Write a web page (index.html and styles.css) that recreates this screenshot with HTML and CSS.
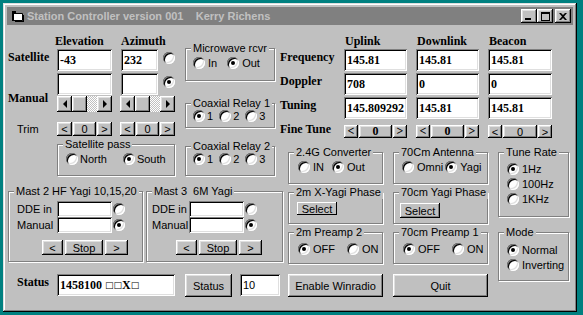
FILE: index.html
```html
<!DOCTYPE html>
<html lang="en">
<head>
<meta charset="UTF-8">
<title>Station Controller</title>
<link rel="stylesheet" href="styles.css">
</head>
<body>
<div class="win">
  <div class="title">
    <svg class="ico" width="16" height="16" viewBox="0 0 16 16">
      <path d="M4.5 5.5h9v7h-9z" fill="#fff" stroke="#000"/>
      <path d="M3 3h4v2h3v1H5v7H3z" fill="#000"/>
      <path d="M14 7h1v7H6v-1h8z" fill="#000"/>
    </svg>
    <span class="ttl">Station Controller version 001    Kerry Richens</span>
    <div class="tbtns">
      <span class="btn tbtn"><svg width="8" height="7" viewBox="0 0 8 7"><path d="M0 5h6v2H0z"/></svg></span>
      <span class="btn tbtn"><svg width="9" height="9" viewBox="0 0 9 9"><path d="M0 0h9v9H0zM1 2v6h7V2z" fill-rule="evenodd"/></svg></span>
      <span class="btn tbtn cls"><svg width="8" height="7" viewBox="0 0 8 7"><path d="M0 0h2l2 2 2-2h2L5 3.5 8 7H6L4 5 2 7H0l3-3.5z"/></svg></span>
    </div>
  </div>

  <div class="client">
    <div class="left">
      <div class="topl">
        <div class="sat">
          <div class="hdr h-el">Elevation</div>
          <div class="hdr h-az">Azimuth</div>
          <div class="lbl l-sat">Satellite</div>
          <div class="tb c-el r2">-43</div>
          <div class="tbr c-az r2"><div class="tb az">232</div><span class="rb"></span></div>
          <div class="lbl l-man">Manual</div>
          <div class="tb c-el r3"></div>
          <div class="tbr c-az r3"><div class="tb az"></div><span class="rb on"></span></div>
          <div class="sb c-el r4"><span class="btn arr al"></span><span class="btn thumb"></span><span class="track"></span><span class="btn arr ar"></span></div>
          <div class="sb c-az r4"><span class="btn arr al"></span><span class="btn thumb"></span><span class="track"></span><span class="btn arr ar"></span></div>
          <div class="trim">Trim</div>
          <div class="spin c-el r5"><span class="btn a">&lt;</span><span class="btn v">0</span><span class="btn a">&gt;</span></div>
          <div class="spin c-az r5"><span class="btn a">&lt;</span><span class="btn v">0</span><span class="btn a">&gt;</span></div>
          <div class="grp pass">
            <div class="cap">Satellite pass</div>
            <div class="opts-row">
              <label class="opt"><span class="rb"></span>North</label>
              <label class="opt"><span class="rb on"></span>South</label>
            </div>
          </div>
        </div>

        <div class="mw">
          <div class="grp g-mw">
            <div class="cap">Microwave rcvr</div>
            <div class="opts-row">
              <label class="opt"><span class="rb"></span>In</label>
              <label class="opt"><span class="rb on"></span>Out</label>
            </div>
          </div>
          <div class="grp g-c1">
            <div class="cap">Coaxial Relay 1</div>
            <div class="opts-row coax">
              <label class="opt"><span class="rb on"></span>1</label>
              <label class="opt"><span class="rb"></span>2</label>
              <label class="opt"><span class="rb"></span>3</label>
            </div>
          </div>
          <div class="grp g-c2">
            <div class="cap">Coaxial Relay 2</div>
            <div class="opts-row coax">
              <label class="opt"><span class="rb on"></span>1</label>
              <label class="opt"><span class="rb"></span>2</label>
              <label class="opt"><span class="rb"></span>3</label>
            </div>
          </div>
        </div>
      </div>

      <div class="masts">
        <div class="grp mast">
          <div class="cap">Mast 2 HF Yagi 10,15,20</div>
          <div class="mgrid">
            <span>DDE in</span><div class="tb sm"></div><span class="rb"></span>
            <span>Manual</span><div class="tb sm"></div><span class="rb on"></span>
          </div>
          <div class="stop"><span class="btn s1">&lt;</span><span class="btn s2">Stop</span><span class="btn s3">&gt;</span></div>
        </div>
        <div class="grp mast m3">
          <div class="cap">Mast 3  6M Yagi</div>
          <div class="mgrid">
            <span>DDE in</span><div class="tb sm"></div><span class="rb"></span>
            <span>Manual</span><div class="tb sm"></div><span class="rb on"></span>
          </div>
          <div class="stop"><span class="btn s1">&lt;</span><span class="btn s2">Stop</span><span class="btn s3">&gt;</span></div>
        </div>
      </div>

      <div class="status">
        <span class="lbl st-l">Status</span>
        <div class="tb st-t">1458100 <span class="bx">□□</span>X<span class="bx">□</span></div>
        <span class="btn st-b">Status</span>
        <div class="tb st-n">10</div>
      </div>
    </div>

    <div class="right">
      <div class="freq">
        <div class="hdr fc2">Uplink</div>
        <div class="hdr fc3">Downlink</div>
        <div class="hdr fc4">Beacon</div>

        <div class="lbl">Frequency</div>
        <div class="tb">145.81</div>
        <div class="tb">145.81</div>
        <div class="tb">145.81</div>

        <div class="lbl">Doppler</div>
        <div class="tb">708</div>
        <div class="tb">0</div>
        <div class="tb">0</div>

        <div class="lbl">Tuning</div>
        <div class="tb">145.809292</div>
        <div class="tb">145.81</div>
        <div class="tb">145.81</div>

        <div class="lbl">Fine Tune</div>
        <div class="spin fine bold"><span class="btn a">&lt;</span><span class="btn v">0</span><span class="btn a">&gt;</span></div>
        <div class="spin fine bold"><span class="btn a">&lt;</span><span class="btn v">0</span><span class="btn a">&gt;</span></div>
        <div class="spin fine"><span class="btn a">&lt;</span><span class="btn v">0</span><span class="btn a">&gt;</span></div>
      </div>

      <div class="opts">
        <div class="grp g-row">
          <div class="cap">2.4G Converter</div>
          <div class="opts-row conv">
            <label class="opt"><span class="rb"></span>IN</label>
            <label class="opt"><span class="rb on"></span>Out</label>
          </div>
        </div>
        <div class="grp g-row">
          <div class="cap">70Cm Antenna</div>
          <div class="opts-row ant">
            <label class="opt"><span class="rb"></span>Omni</label>
            <label class="opt"><span class="rb on"></span>Yagi</label>
          </div>
        </div>
        <div class="grp g-rate">
          <div class="cap">Tune Rate</div>
          <div class="vlist">
            <label class="opt"><span class="rb on"></span>1Hz</label>
            <label class="opt"><span class="rb"></span>100Hz</label>
            <label class="opt"><span class="rb"></span>1KHz</label>
          </div>
        </div>

        <div class="grp g-row">
          <div class="cap">2m X-Yagi Phase</div>
          <span class="btn sel sel1">Select</span>
        </div>
        <div class="grp g-row">
          <div class="cap">70cm Yagi Phase</div>
          <span class="btn sel sel2">Select</span>
        </div>

        <div class="grp g-row">
          <div class="cap">2m Preamp 2</div>
          <div class="opts-row pre">
            <label class="opt"><span class="rb on"></span>OFF</label>
            <label class="opt"><span class="rb"></span>ON</label>
          </div>
        </div>
        <div class="grp g-row">
          <div class="cap">70cm Preamp 1</div>
          <div class="opts-row pre">
            <label class="opt"><span class="rb on"></span>OFF</label>
            <label class="opt"><span class="rb"></span>ON</label>
          </div>
        </div>
        <div class="grp g-mode">
          <div class="cap">Mode</div>
          <div class="vlist">
            <label class="opt"><span class="rb on"></span>Normal</label>
            <label class="opt"><span class="rb"></span>Inverting</label>
          </div>
        </div>

        <span class="btn big">Enable Winradio</span>
        <span class="btn big">Quit</span>
      </div>
    </div>
  </div>
</div>
</body>
</html>
```

FILE: styles.css
```css
*{margin:0;padding:0;box-sizing:border-box}
body{background:#008080;font:11px "Liberation Sans",Arial,sans-serif;color:#000}

/* window frame */
.win{
    width:574px;height:309px;margin:3px 0 0 3px;padding:4px;
    background:#c0c0c0;display:flex;flex-direction:column;
    box-shadow:inset -1px -1px #000,inset 1px 1px #dfdfdf,inset -2px -2px #808080,inset 2px 2px #fff;
}
.title{height:18px;background:#808080;display:flex;align-items:center;padding:0 2px}
.ico{flex:none;margin-right:2px}
.ttl{color:#c0c0c0;font-weight:bold;white-space:pre}
.tbtns{margin-left:auto;display:flex}
.tbtn{width:16px;height:14px}
.tbtn svg{fill:#000}
.cls{margin-left:2px}

/* win95 bits */
.btn{
    background:#c0c0c0;display:flex;align-items:center;justify-content:center;
    box-shadow:inset -1px -1px #000,inset 1px 1px #fff,inset -2px -2px #808080,inset 2px 2px #dfdfdf;
}
.tb{
    background:#fff;height:22px;display:flex;align-items:center;padding:0 3px;
    font:bold 12px "Liberation Serif",serif;white-space:pre;
    box-shadow:inset 1px 1px #808080,inset -1px -1px #fff,inset 2px 2px #000,inset -2px -2px #dfdfdf;
}
.rb{
    width:12px;height:12px;border-radius:50%;background:#fff;flex:none;position:relative;
    box-shadow:inset 1px 1px #808080,inset -1px -1px #fff,inset 2px 2px #000,inset -2px -2px #dfdfdf;
}
.rb.on::after{content:"";position:absolute;left:4px;top:4px;width:4px;height:4px;border-radius:50%;background:#000}
.grp{border:1px solid #808080;box-shadow:1px 1px #fff,inset 1px 1px #fff}
.cap{display:table;margin:-7px 0 0 5px;padding:0 2px;background:#c0c0c0;line-height:13px;white-space:pre}
.opt{display:flex;align-items:center;gap:3px}
.opts-row{display:flex}
.vlist{display:flex;flex-direction:column}
.hdr,.lbl{font:bold 12px "Liberation Serif",serif;line-height:14px}

/* client */
.client{flex:1;display:grid;grid-template-columns:273px 293px}
.left{display:flex;flex-direction:column}
.topl{display:flex;padding:9px 0 0 1px}

.sat{
    display:grid;
    grid-template-columns:49px 55px 8px 55px;
    grid-template-rows:15px 24px 23px 16px 24px 40px;
}
.h-el{grid-column:2;grid-row:1;margin-left:-2px}
.h-az{grid-column:4;grid-row:1;margin-left:1px}
.l-sat{grid-column:1;grid-row:2;padding-top:1px}
.l-man{grid-column:1;grid-row:3/5;padding-top:18px}
.c-el{grid-column:2}
.c-az{grid-column:4}
.r2{grid-row:2}
.r3{grid-row:3}
.r4{grid-row:4}
.r5{grid-row:5;align-self:end}
.tbr{display:flex;align-items:flex-start;gap:5px;padding-left:1px}
.tbr .rb{margin-top:3px}
.az{width:37px}
.sb{display:flex;height:16px}
.arr{width:15px}
.thumb{width:15px}
.track{flex:1;background:repeating-conic-gradient(#c0c0c0 0 25%,#fff 0 50%) 0 0/2px 2px}
.al::before,.ar::before{content:"";border:4px solid transparent}
.al::before{border-right-color:#000;border-left:0}
.ar::before{border-left-color:#000;border-right:0}
.trim{grid-column:1;grid-row:5;align-self:end;padding-left:9px;line-height:14px}
.spin{display:flex;gap:1px;height:14px}
.spin .a{width:15px}
.spin .v{flex:1}
.pass{grid-column:2/5;grid-row:6;align-self:end;height:32px}
.pass .opts-row{padding:2px 0 0 8px;gap:16px}
.pass .opt{gap:2px}

.mw{display:flex;flex-direction:column;width:90px;margin:14px 0 0 10px}
.g-mw{height:33px}
.g-mw .opts-row{padding:2px 0 0 7px;gap:10px}
.g-c1{height:25px;margin-top:22px}
.g-c1 .opts-row{padding:0 0 0 7px}
.g-c2{height:30px;margin-top:18px}
.g-c2 .opts-row{padding:0 0 0 7px}
.coax{gap:6px}
.coax .opt{gap:2px}

.masts{display:flex;gap:3px;margin:15px 0 0 1px;width:276px}
.mast{width:135px;height:71px}
.m3{width:137px}
.mgrid{display:grid;grid-template-columns:40px 55px 12px;grid-template-rows:16px 16px;padding:3px 0 0 8px;align-items:center}
.m3 .mgrid{grid-template-columns:37px 55px 12px;padding-left:5px}
.tb.sm{height:16px}
.mgrid .rb{margin-left:1px}
.stop{display:flex;gap:2px;height:15px;margin:7px 0 0 33px}
.m3 .stop{margin-left:29px}
.s1{width:21px}
.s2{width:38px}
.s3{width:23px}

.status{display:flex;align-items:flex-start;margin:12px 0 0 10px}
.st-l{width:40px;padding-top:1px}
.st-t{width:118px}
.bx{font:9px "DejaVu Sans",sans-serif}
.st-b{width:47px;height:23px;margin-left:10px}
.st-n{width:40px;margin-left:8px;font:11px "Liberation Sans",Arial,sans-serif}

/* right side */
.freq{
    display:grid;padding-top:9px;
    grid-template-columns:55px 63px 63px 64px;column-gap:9px;
    grid-template-rows:15px 24px 24px 24px 19px;
    align-items:start;
}
.freq .lbl{padding-top:1px;white-space:nowrap}
.freq .hdr{margin-left:1px}
.fc2{grid-column:2}
.fc3{grid-column:3}
.fc4{grid-column:4}
.fine{height:13px;margin-top:4px}
.fine .a{width:14px}
.fine.bold{font:bold 12px "Liberation Serif",serif}

.opts{
    display:grid;margin:12px 0 0 8px;
    grid-template-columns:95px 95px 71px;column-gap:10px;
    grid-template-rows:32px 32px 32px 25px;row-gap:8px;
}
.g-row{height:32px}
.conv{padding:2px 0 0 9px;gap:8px}
.ant{padding:2px 0 0 8px;gap:2px}
.g-rate{grid-column:3;grid-row:1/3;height:65px}
.g-rate .vlist{padding:4px 0 0 8px;gap:3px}
.sel{width:40px;height:13px;margin:3px 0 0 8px;box-shadow:inset -1px -1px #000,inset 1px 1px #fff}
.sel2{height:15px;margin:4px 0 0 6px;box-shadow:inset -1px -1px #000,inset 1px 1px #fff,inset -2px -2px #808080}
.pre{padding:4px 0 0 9px;gap:12px}
.g-mode{grid-column:3;grid-row:3/5;height:49px}
.g-mode .vlist{padding:5px 0 0 8px;gap:3px}
.big{height:23px;align-self:end}
```
